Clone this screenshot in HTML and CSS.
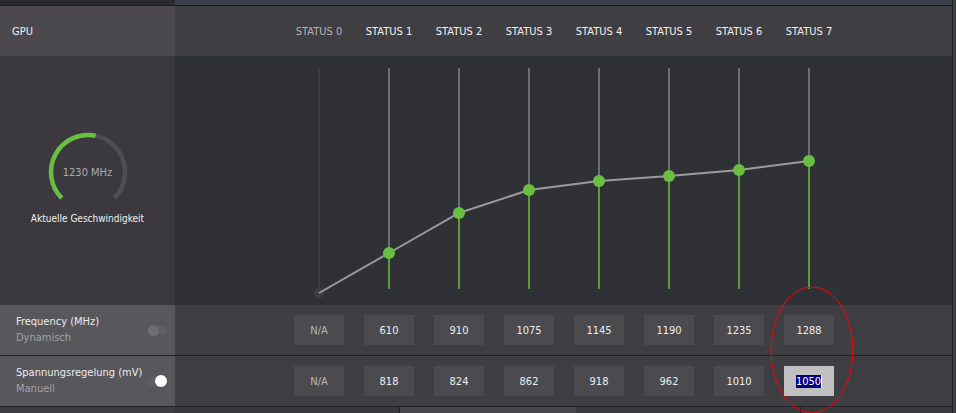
FILE: index.html
```html
<!DOCTYPE html>
<html lang="de">
<head>
  <meta charset="UTF-8" />
  <meta name="viewport" content="width=device-width, initial-scale=1.0" />
  <title>GPU Status</title>
  <link rel="stylesheet" href="styles.css">
</head>
<body>
  <div class="app">
    <div class="topbar">
      <div class="tb-left"></div>
      <div class="tb-right"></div>
    </div>

    <div class="row header">
      <div class="side">GPU</div>
      <div class="cols">
        <div class="status dim">STATUS 0</div>
        <div class="status">STATUS 1</div>
        <div class="status">STATUS 2</div>
        <div class="status">STATUS 3</div>
        <div class="status">STATUS 4</div>
        <div class="status">STATUS 5</div>
        <div class="status">STATUS 6</div>
        <div class="status">STATUS 7</div>
      </div>
    </div>

    <div class="row chart">
      <div class="side gauge-box">
        <div class="gauge">
          <svg width="84" height="84" viewBox="0 0 84 84">
            <path d="M49.69 5.81 A37 37 0 0 1 68.16 68.16" fill="none" stroke="#4e4d52" stroke-width="4.5"/>
            <path d="M15.84 68.16 A37 37 0 0 1 49.69 5.81" fill="none" stroke="#6abf42" stroke-width="4.5"/>
          </svg>
          <div class="gauge-value">1230 MHz</div>
        </div>
        <div class="gauge-label">Aktuelle Geschwindigkeit</div>
      </div>
      <div class="plot">
        <svg width="777" height="249" viewBox="0 0 777 249">
          <!-- status 0 (disabled) -->
          <line x1="144" y1="12" x2="144" y2="237" stroke="#3d3f44" stroke-width="1.5"/>

          <g stroke="#858585" stroke-width="1.5">
            <line x1="214" y1="12" x2="214" y2="197"/>
            <line x1="284" y1="12" x2="284" y2="157"/>
            <line x1="354" y1="12" x2="354" y2="134"/>
            <line x1="424" y1="12" x2="424" y2="125"/>
            <line x1="494" y1="12" x2="494" y2="120"/>
            <line x1="564" y1="12" x2="564" y2="114"/>
            <line x1="634" y1="12" x2="634" y2="105"/>
          </g>
          <g stroke="#6abf42" stroke-width="1.5">
            <line x1="214" y1="197" x2="214" y2="233"/>
            <line x1="284" y1="157" x2="284" y2="233"/>
            <line x1="354" y1="134" x2="354" y2="233"/>
            <line x1="424" y1="125" x2="424" y2="233"/>
            <line x1="494" y1="120" x2="494" y2="233"/>
            <line x1="564" y1="114" x2="564" y2="233"/>
            <line x1="634" y1="105" x2="634" y2="233"/>
          </g>

          <circle cx="144" cy="237" r="5" fill="#3b3d42"/>
          <polyline points="144,237 214,197 284,157 354,134 424,125 494,120 564,114 634,105"
                    fill="none" stroke="#9b9b9b" stroke-width="2"/>

          <g fill="#6abf42">
            <circle cx="214" cy="197" r="6"/>
            <circle cx="284" cy="157" r="6"/>
            <circle cx="354" cy="134" r="6"/>
            <circle cx="424" cy="125" r="6"/>
            <circle cx="494" cy="120" r="6"/>
            <circle cx="564" cy="114" r="6"/>
            <circle cx="634" cy="105" r="6"/>
          </g>
        </svg>
      </div>
    </div>

    <div class="row setting">
      <div class="side">
        <div class="label">
          <div class="title">Frequency (MHz)</div>
          <div class="mode">Dynamisch</div>
        </div>
        <div class="toggle off"><span class="knob"></span></div>
      </div>
      <div class="cols">
        <div class="val na">N/A</div>
        <div class="val">610</div>
        <div class="val">910</div>
        <div class="val">1075</div>
        <div class="val">1145</div>
        <div class="val">1190</div>
        <div class="val">1235</div>
        <div class="val">1288</div>
      </div>
    </div>

    <div class="row setting">
      <div class="side">
        <div class="label">
          <div class="title">Spannungsregelung (mV)</div>
          <div class="mode">Manuell</div>
        </div>
        <div class="toggle on"><span class="knob"></span></div>
      </div>
      <div class="cols">
        <div class="val na">N/A</div>
        <div class="val">818</div>
        <div class="val">824</div>
        <div class="val">862</div>
        <div class="val">918</div>
        <div class="val">962</div>
        <div class="val">1010</div>
        <div class="val active"><span class="sel">1050</span><span class="caret"></span></div>
      </div>
    </div>

    <div class="bottombar">
      <div class="bb bb-side"></div>
      <div class="bb bb-a"></div>
      <div class="bb bb-b"></div>
      <div class="bb bb-c"></div>
      <div class="bb bb-d"></div>
    </div>

    <svg class="marker" width="84" height="128" viewBox="0 0 84 128">
      <ellipse cx="42" cy="64" rx="41" ry="63" fill="none" stroke="#ff0000" stroke-width="1"/>
    </svg>
  </div>
</body>
</html>
```

FILE: styles.css
```css
* {
  box-sizing: border-box;
}

body {
  margin: 0;
  background: #3f3e43;
  color: #eeeeee;
  font-family: "DejaVu Sans Condensed", "DejaVu Sans", sans-serif;
  font-stretch: condensed;
  font-size: 11px;
  overflow: hidden;
}

.app {
  position: relative;
  width: 953px;
  border-right: 1px solid #1f1f23;
}

.topbar {
  display: flex;
  height: 6px;
  border-bottom: 1px solid #1d1d21;
}

.tb-left {
  width: 175px;
  background: #2b2b2f;
}

.tb-right {
  flex: 1;
  background: #3b404a;
}

.row {
  display: flex;
}

.side {
  width: 175px;
  flex: none;
}

.cols {
  flex: 1;
  display: grid;
  grid-template-columns: repeat(8, 70px);
  padding-left: 109px;
  align-items: center;
  justify-items: center;
}

/* header */
.header {
  height: 50px;
}

.header .side {
  display: flex;
  align-items: center;
  padding-left: 12px;
  background: #4b494d;
  color: #f0f0f0;
}

.header .cols {
  background: #3f3e43;
}

.status {
  color: #f2f2f2;
}

.status.dim {
  color: #b3b3b7;
}

/* chart */
.chart {
  height: 249px;
}

.gauge-box {
  display: flex;
  flex-direction: column;
  align-items: center;
  justify-content: center;
  padding-bottom: 6px;
  background: #3b393e;
}

.gauge {
  position: relative;
  width: 84px;
  height: 84px;
}

.gauge svg {
  display: block;
}

.gauge-value {
  position: absolute;
  top: 0;
  left: 0;
  right: 0;
  bottom: 0;
  display: flex;
  align-items: center;
  justify-content: center;
  color: #a9acb6;
}

.gauge-label {
  margin-top: -1px;
  font-size: 10px;
  line-height: 12px;
  color: #f0f0f0;
}

.plot {
  flex: 1;
  background: #2f3136;
}

.plot svg {
  display: block;
}

/* setting rows */
.setting {
  height: 51px;
  border-bottom: 1px solid #222226;
}

.setting .side {
  display: flex;
  align-items: center;
  justify-content: space-between;
  padding: 0 8px 0 16px;
  background: #58575b;
}

.setting .cols {
  background: #3f3e43;
}

.label {
  line-height: 16px;
}

.title {
  color: #ececec;
}

.mode {
  color: #a3a2a6;
}

.toggle {
  position: relative;
  width: 20px;
  height: 9px;
  border-radius: 5px;
  background: #5f5e63;
}

.knob {
  position: absolute;
  top: 50%;
  border-radius: 50%;
}

.toggle.off .knob {
  left: 1px;
  width: 11px;
  height: 11px;
  margin-top: -5.5px;
  background: #6e6d72;
}

.toggle.on .knob {
  right: 0;
  width: 12px;
  height: 12px;
  margin-top: -6px;
  background: #ffffff;
}

.val {
  display: flex;
  align-items: center;
  justify-content: center;
  width: 50px;
  height: 30px;
  background: #4b4a4f;
  color: #eeeeee;
}

.val.na {
  color: #b8b8bc;
}

.val.active {
  background: #c0c0c0;
}

.sel {
  background: #000080;
  color: #ffffff;
}

.caret {
  width: 1px;
  height: 13px;
  background: #ffffff;
}

/* bottom strip */
.bottombar {
  display: flex;
  height: 6px;
}

.bb-side {
  width: 175px;
  background: #3d3c41;
}

.bb-a {
  width: 225px;
  background: #38373c;
  border-right: 1px solid #1e1e22;
}

.bb-b {
  width: 176px;
  background: #46454a;
}

.bb-c {
  width: 225px;
  background: #3a393e;
  border-right: 1px solid #1e1e22;
}

.bb-d {
  flex: 1;
  background: #3a393e;
}

/* annotation drawn over the last column */
.marker {
  position: absolute;
  left: 770px;
  top: 286px;
  pointer-events: none;
}
```
